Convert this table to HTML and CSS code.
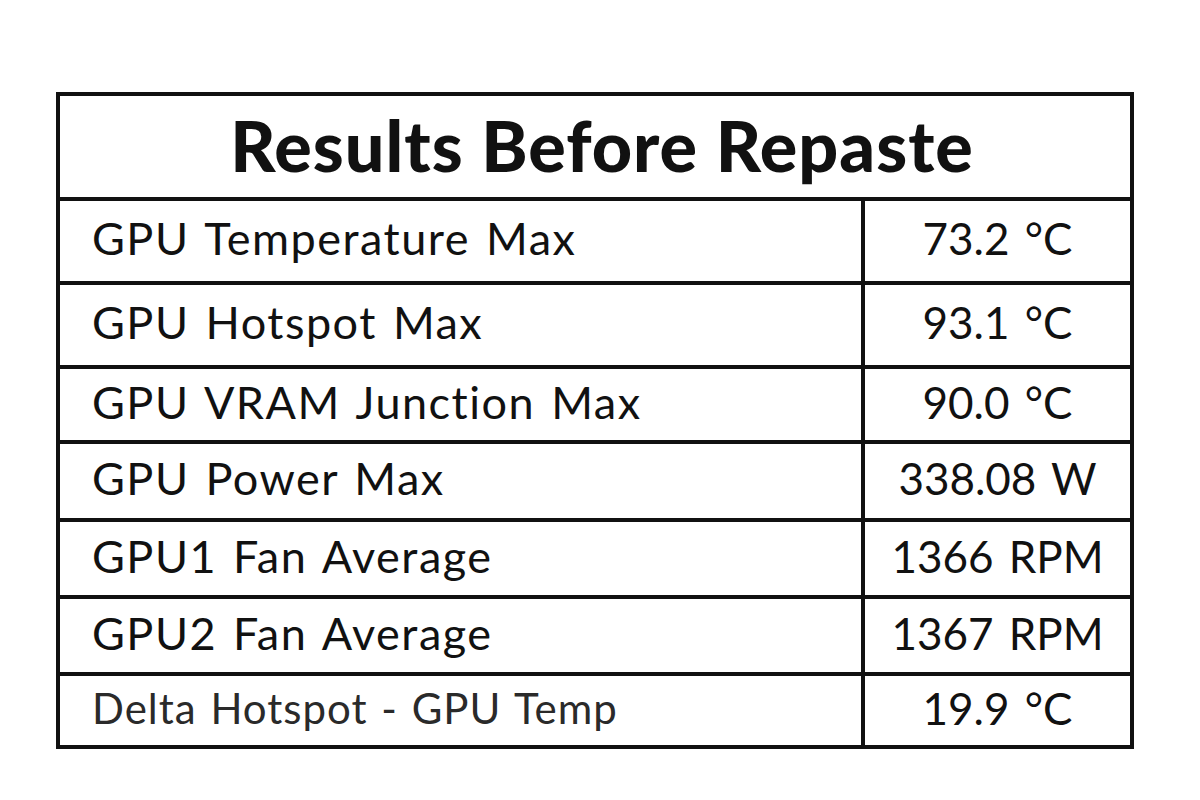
FILE: index.html
```html
<!DOCTYPE html>
<html>
<head>
<meta charset="utf-8">
<link rel="stylesheet" href="styles.css">
</head>
<body>
<div class="sheet">
  <div class="table">
    <div class="title">Results Before Repaste</div>
    <div class="row r1"><div class="label">GPU Temperature Max</div><div class="value">73.2 °C</div></div>
    <div class="row r2"><div class="label">GPU Hotspot Max</div><div class="value">93.1 °C</div></div>
    <div class="row r3"><div class="label">GPU VRAM Junction Max</div><div class="value">90.0 °C</div></div>
    <div class="row r4"><div class="label">GPU Power Max</div><div class="value">338.08 W</div></div>
    <div class="row r5"><div class="label">GPU1 Fan Average</div><div class="value">1366 RPM</div></div>
    <div class="row r6"><div class="label">GPU2 Fan Average</div><div class="value">1367 RPM</div></div>
    <div class="row r7"><div class="label">Delta Hotspot - GPU Temp</div><div class="value">19.9 °C</div></div>
  </div>
</div>
</body>
</html>
```
FILE: styles.css
```css
html, body {
  margin: 0;
  padding: 0;
  background: #ffffff;
}
body {
  width: 1200px;
  height: 800px;
  overflow: hidden;
  font-family: "Lato", "Noto Sans", sans-serif;
  color: #111111;
}
.sheet {
  padding: 92px 0 0 56px;
}
.table {
  width: 1078px;
  border: 4px solid #111;
  box-sizing: border-box;
}
.title {
  height: 101px;
  display: flex;
  align-items: center;
  justify-content: center;
  font-size: 70px;
  font-weight: 900;
  letter-spacing: 1px;
  padding: 0 0 4px 14px;
  box-sizing: border-box;
}
.row {
  display: grid;
  grid-template-columns: 805px 1fr;
  border-top: 4px solid #111;
  box-sizing: border-box;
}
.r1, .r2 { height: 84px; }
.r3 { height: 75px; }
.r4 { height: 78px; }
.r5, .r6 { height: 77px; }
.r7 { height: 73px; }
.label {
  display: flex;
  align-items: center;
  padding-left: 32px;
  font-size: 45px;
  letter-spacing: 1.5px;
  word-spacing: 3px;
  border-right: 4px solid #111;
  padding-bottom: 6px;
}
.value {
  display: flex;
  align-items: center;
  justify-content: center;
  font-size: 44px;
  letter-spacing: 0px;
  word-spacing: 4px;
  padding-bottom: 6px;
}
.r7 .label { color: #2a2a2a; font-size: 42px; letter-spacing: 1px; word-spacing: 2px; }
```
